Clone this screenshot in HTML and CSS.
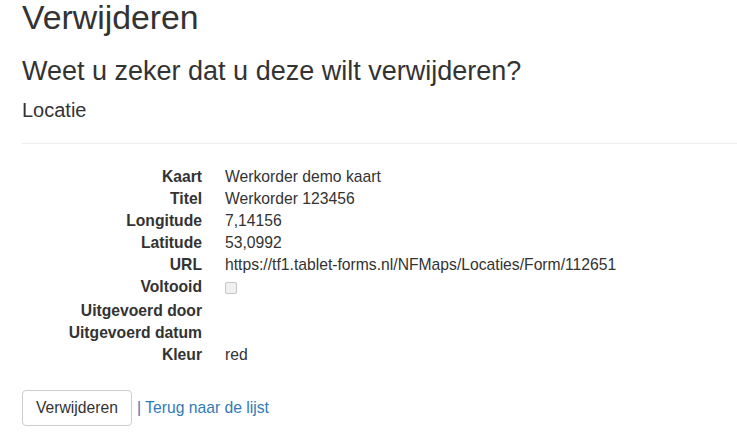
FILE: index.html
```html
<!DOCTYPE html>
<html lang="nl">
<head>
    <meta charset="utf-8">
    <title>Verwijderen</title>
    <link rel="stylesheet" href="styles.css">
</head>
<body>
    <main class="container">
        <h2 class="page-title">Verwijderen</h2>

        <h3 class="confirm">Weet u zeker dat u deze wilt verwijderen?</h3>

        <div class="details">
            <h4 class="entity">Locatie</h4>
            <hr class="divider">

            <dl class="dl-horizontal">
                <dt>Kaart</dt>
                <dd>Werkorder demo kaart</dd>
                <dt>Titel</dt>
                <dd>Werkorder 123456</dd>
                <dt>Longitude</dt>
                <dd>7,14156</dd>
                <dt>Latitude</dt>
                <dd>53,0992</dd>
                <dt>URL</dt>
                <dd>https://tf1.tablet-forms.nl/NFMaps/Locaties/Form/112651</dd>
                <dt>Voltooid</dt>
                <dd class="check-cell"><input type="checkbox" class="check-box" disabled></dd>
                <dt>Uitgevoerd door</dt>
                <dd></dd>
                <dt>Uitgevoerd datum</dt>
                <dd></dd>
                <dt>Kleur</dt>
                <dd>red</dd>
            </dl>

            <form class="form-actions">
                <button type="button" class="btn">Verwijderen</button>
                <a href="#" class="back-link">| Terug naar de lijst</a>
            </form>
        </div>
    </main>
</body>
</html>
```

FILE: styles.css
```css
* {
    box-sizing: border-box;
}

body {
    margin: 0;
    background: #fff;
    color: #333;
    font-family: 'Liberation Sans', Arial, sans-serif;
    font-size: 15.7px;
    line-height: 22px;
}

.container {
    padding: 0 0 0 22px;
}

/* Headings */
.page-title {
    margin: 0;
    font-size: 33.8px;
    font-weight: 500;
    line-height: 34px;
}

.confirm {
    margin: 23px 0 0;
    font-size: 27px;
    font-weight: 500;
    line-height: 29px;
}

.entity {
    margin: 13px 0 0;
    font-size: 20px;
    font-weight: 500;
    line-height: 22px;
}

.divider {
    margin: 22px 0;
    border: 0;
    border-top: 1px solid #eee;
}

/* Details list */
.dl-horizontal {
    display: grid;
    grid-template-columns: 180px 1fr;
    column-gap: 23px;
    margin: 0 0 24px;
}

.dl-horizontal dt {
    font-weight: 700;
    text-align: right;
    white-space: nowrap;
}

.dl-horizontal dd {
    margin: 0;
    min-height: 22px;
}

.check-cell {
    height: 24px;
}

.check-box {
    -webkit-appearance: none;
    appearance: none;
    display: block;
    width: 12px;
    height: 12px;
    margin: 6px 0 0;
    border: 1px solid #c6c6c6;
    border-radius: 2px;
    background: #f0f0f0;
}

/* Actions */
.form-actions {
    display: flex;
    align-items: center;
    gap: 5px;
}

.btn {
    height: 36px;
    padding: 0 13px;
    border: 1px solid #ccc;
    border-radius: 4px;
    background: #fff;
    color: #333;
    font-family: inherit;
    font-size: 15.7px;
    line-height: 22px;
    cursor: pointer;
}

.back-link {
    color: #337ab7;
    text-decoration: none;
}
```
